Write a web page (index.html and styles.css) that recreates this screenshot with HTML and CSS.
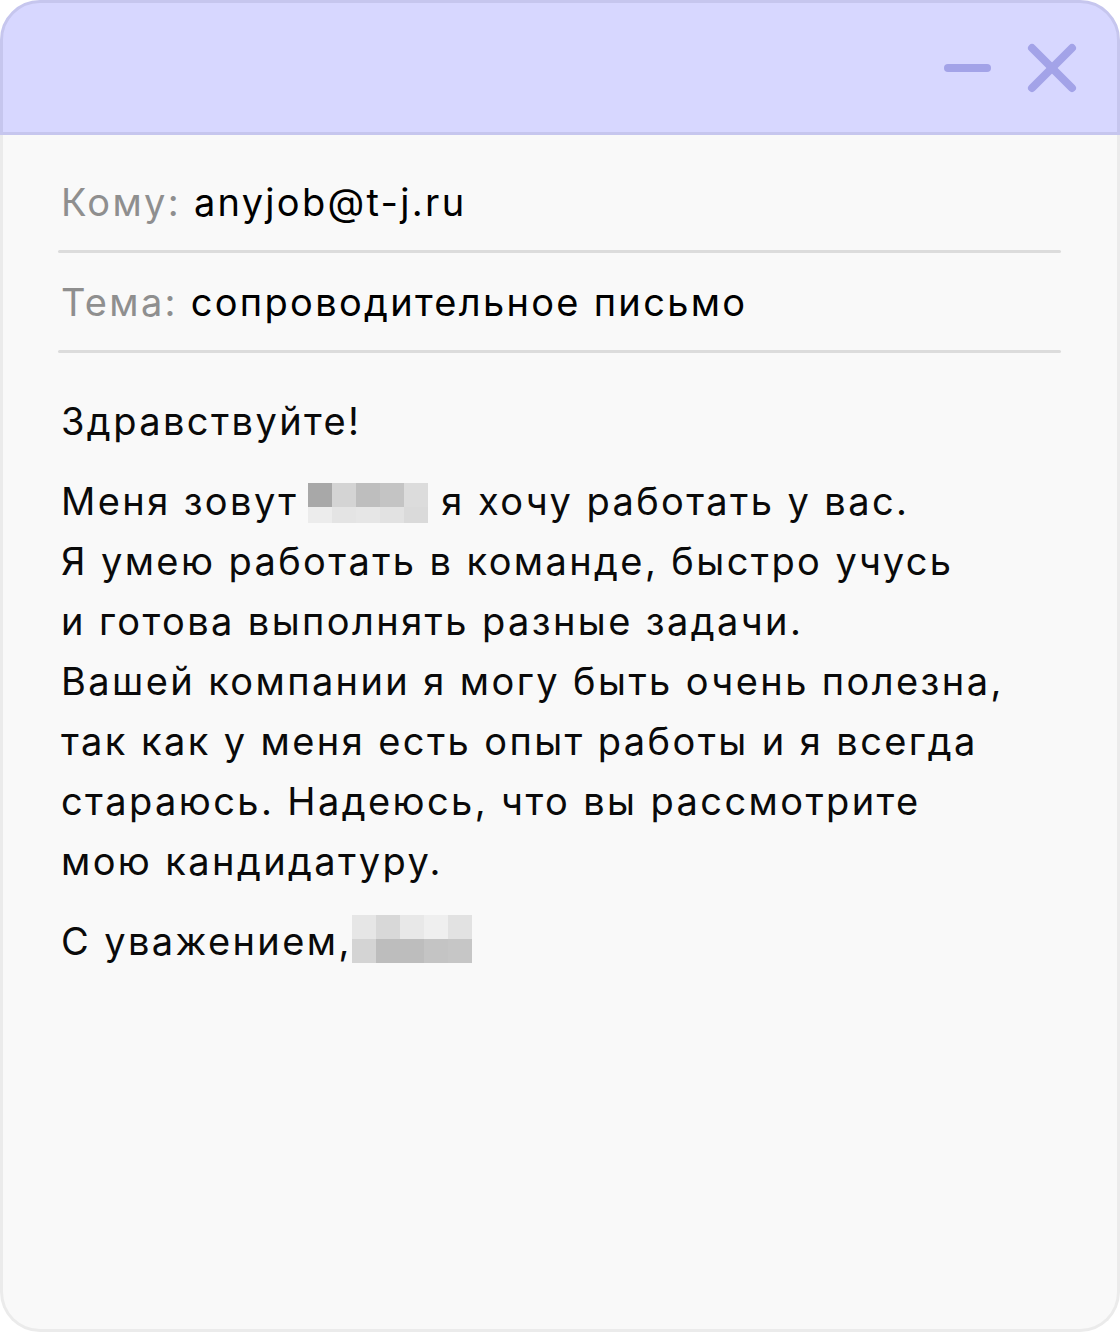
FILE: index.html
```html
<!DOCTYPE html>
<html lang="ru">
<head>
<meta charset="utf-8">
<title>Письмо</title>
<link rel="stylesheet" href="styles.css">
</head>
<body>
<div class="window">
  <div class="titlebar">
    <svg class="ctrl" width="160" height="60" viewBox="0 0 160 60" aria-hidden="true">
      <line x1="12" y1="30" x2="51" y2="30" />
      <line x1="96" y1="10" x2="136" y2="50" />
      <line x1="136" y1="10" x2="96" y2="50" />
    </svg>
  </div>
  <div class="content">
    <div class="field"><span class="label">Кому:</span> anyjob@t-j.ru</div>
    <div class="divider"></div>
    <div class="field"><span class="label">Тема:</span> сопроводительное письмо</div>
    <div class="divider"></div>
    <div class="letter">
      <p>Здравствуйте!</p>
      <p>Меня зовут<span class="blur blur-a"><span class="cells"><i style="background:#a8a8a8"></i><i style="background:#d4d4d4"></i><i style="background:#bebebe"></i><i style="background:#c4c4c4"></i><i style="background:#dcdcdc"></i><i style="background:#ececec"></i><i style="background:#e4e4e4"></i><i style="background:#e6e6e6"></i><i style="background:#e2e2e2"></i><i style="background:#dadada"></i></span></span>я хочу работать у вас.<br>Я умею работать в команде, быстро учусь<br>и готова выполнять разные задачи.<br>Вашей компании я могу быть очень полезна,<br>так как у меня есть опыт работы и я всегда<br>стараюсь. Надеюсь, что вы рассмотрите<br>мою кандидатуру.</p>
      <p>С уважением,<span class="blur blur-b"><span class="cells"><i style="background:#e6e6e6"></i><i style="background:#d8d8d8"></i><i style="background:#e8e8e8"></i><i style="background:#efefef"></i><i style="background:#e2e2e2"></i><i style="background:#d4d4d4"></i><i style="background:#bdbdbd"></i><i style="background:#bdbdbd"></i><i style="background:#c4c4c4"></i><i style="background:#c6c6c6"></i></span></span></p>
    </div>
  </div>
</div>
</body>
</html>
```

FILE: styles.css
```css
* { box-sizing: border-box; }
html, body {
  margin: 0;
  padding: 0;
  background: #ffffff;
}
body {
  width: 1120px;
  height: 1332px;
  font-family: "Inter", "Roboto", sans-serif;
}
.window {
  width: 1120px;
  height: 1332px;
  display: flex;
  flex-direction: column;
}
.titlebar {
  height: 135px;
  flex: none;
  background: #d7d7ff;
  border: 3px solid #c6c6ee;
  border-radius: 40px 40px 0 0;
  display: flex;
  justify-content: flex-end;
  align-items: flex-start;
  padding-top: 35px;
  padding-right: 21px;
}
.ctrl line {
  stroke: #a3a3e8;
  stroke-width: 8;
  stroke-linecap: round;
}
.content {
  flex: 1;
  background: #f9f9f9;
  border: 3px solid #ebebeb;
  border-top: none;
  border-radius: 0 0 40px 40px;
  padding: 18px 56px 0 55px;
}
.field {
  font-size: 38px;
  line-height: 60px;
  letter-spacing: 2.3px;
  color: #000;
  padding: 19px 0 18px 3px;
}
.label { color: #8f8f8f; }
.divider {
  height: 3px;
  border-radius: 2px;
  background: #dcdcdc;
}
.letter {
  padding: 38px 0 0 3px;
  font-size: 38px;
  line-height: 60px;
  letter-spacing: 2.4px;
  color: #0a0a0a;
}
.letter p { margin: 0 0 20px; }
.blur {
  display: inline-block;
  overflow: hidden;
  width: 120px;
  line-height: 0;
  margin: 0 13px 0 10px;
  vertical-align: -8px;
}
.cells {
  display: grid;
  grid-template-columns: repeat(5, 24px);
}
.cells i { display: block; }
.blur-a .cells { grid-template-rows: 24px 16px; }
.blur-b .cells { grid-template-rows: 24px 24px; }
.blur-b { margin-left: 0; }
```
